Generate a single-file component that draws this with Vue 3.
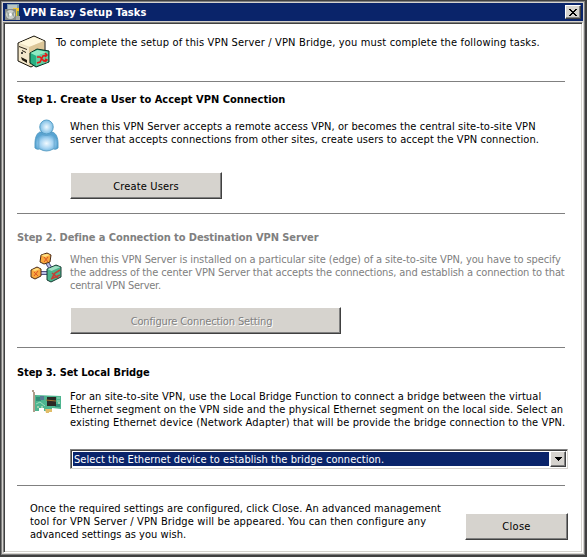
<script setup>
const steps = {
  one: [
    ['When this VPN Server accepts a remote access VPN, or becomes the central site-to-site VPN', 'a1'],
    ['server that accepts connections from other sites, create users to accept the VPN connection.', 'a2'],
  ],
  two: [
    ['When this VPN Server is installed on a particular site (edge) of a site-to-site VPN, you have to specify', 'b1'],
    ['the address of the center VPN Server that accepts the connections, and establish a connection to that', 'b2'],
    ['central VPN Server.', 'b3'],
  ],
  three: [
    ['For an site-to-site VPN, use the Local Bridge Function to connect a bridge between the virtual', 'c1'],
    ['Ethernet segment on the VPN side and the physical Ethernet segment on the local side. Select an', 'c2'],
    ['existing Ethernet device (Network Adapter) that will be provide the bridge connection to the VPN.', 'c3'],
  ],
  end: [
    ['Once the required settings are configured, click Close. An advanced management', 'd1'],
    ['tool for VPN Server / VPN Bridge will be appeared. You can then configure any', 'd2'],
    ['advanced settings as you wish.', 'd3'],
  ],
}
</script>

<template>
  <div class="window">
    <div class="frame">
      <header class="titlebar">
        <svg class="title-icon" width="16" height="16" viewBox="0 0 16 16">
          <path d="M2 0h12v5H2z" fill="#7c9bab" /><path d="M3 1h9v5H3z" fill="#b9c4c2" />
          <path d="M8 4h6v8h-3V6H8z" fill="#f1c42c" /><path d="M12 7h2v6h-2z" fill="#7a9a58" />
          <path d="M0 5h11v11H0z" fill="#858a85" /><circle cx="5.5" cy="10.500" r="4.6" fill="#cdd2ce" />
          <path d="M2 7l3 3-2 4zM9 7l-3 3 3 3z" fill="#98a49c" /><circle cx="5.5" cy="10.500" r="1.4" fill="#fff" />
          <path d="M11 12h4v4h-4z" fill="#a7aaa5" />
        </svg>
        <h1 class="title">VPN Easy Setup Tasks</h1>
        <button class="close-x" aria-label="Close window">
          <svg width="8" height="7" viewBox="0 0 8 7" shape-rendering="crispEdges">
            <path d="M0 0h2v1h1v1h2V1h1V0h2v1H7v1H6v1H5v1h1v1h1v1h1v1H6V6H5V5H3v1H2v1H0V6h1V5h1V4h1V3H2V2H1V1H0z" />
          </svg>
        </button>
      </header>

      <main class="client">
        <section class="intro">
          <svg width="33" height="33" viewBox="0 0 33 33">
            <path d="M1 8L17 1l11 5v18l-14 8L1 26z" fill="#eadfc1" stroke="#151007" />
            <path d="M2 8l15-6 10 4-14 6z" fill="#fff7dc" />
            <path d="M12 12l15-6v17l-15 8z" fill="#dcc698" />
            <path d="M2 9l10 4v17L2 25z" fill="#f4e8cb" />
            <path d="M2 11l8 3v1l-8-3zM5 15l4 2v1l-4-2zM4 22l6 3v3l-5-3z" fill="#251d11" />
            <circle cx="5" cy="18" r="1" fill="#111" />
            <path d="M13 18l7-4 12 2v11l-13 5-6-4z" fill="#28b183" stroke="#062f23" />
            <path d="M13.500 18l7-3 11 2-12 4z" fill="#8eeac3" />
            <path d="M19 21l12-4v10l-12 4z" fill="#65cda1" />
            <path d="M20 22h3l4 4 3-1M20 28l3-1 3-6 4-1M28 18l2 2-2 2M28 24l2 1-2 2" fill="none" stroke="#e21a18" stroke-width="1.600" />
          </svg>
          <p class="text i1">To complete the setup of this VPN Server / VPN Bridge, you must complete the following tasks.</p>
        </section>

        <section class="step step-one">
          <h2 class="heading">Step 1. Create a User to Accept VPN Connection</h2>
          <div class="detail">
            <svg class="user" width="25" height="33" viewBox="0 0 26 33" preserveAspectRatio="none">
              <defs>
                <radialGradient id="body" cx=".5" cy=".6"><stop offset="0" stop-color="#f2faff" /><stop offset=".55" stop-color="#a5d3f2" /><stop offset="1" stop-color="#58a4d2" /></radialGradient>
                <radialGradient id="head"><stop offset="0" stop-color="#eff9ff" /><stop offset="1" stop-color="#7bbde5" /></radialGradient>
              </defs>
              <path d="M6 13C2 15 1 20 1 25v4q2 2 5 1 7 4 14 0 3 1 5-1v-5c0-5-2-10-6-11z" fill="url(#body)" stroke="#4a93bd" stroke-width=".8" />
              <path d="M5 18v12M21 18v12" stroke="#66a8d0" stroke-width=".8" />
              <circle cx="13" cy="8" r="7" fill="url(#head)" stroke="#559cc4" />
              <path d="M7 14q6 5 12 0" fill="none" stroke="#5c9fcb" />
            </svg>
            <div class="copy"><p v-for="[line, name] in steps.one" :key="name" class="text" :class="name">{{ line }}</p></div>
          </div>
          <button class="button create"><span class="e1">Create Users</span></button>
        </section>

        <section class="step step-two">
          <h2 class="heading">Step 2. Define a Connection to Destination VPN Server</h2>
          <div class="detail">
            <svg class="nodes" width="32" height="31" viewBox="0 0 32 31">
              <path d="M16 9l5 8M9 21h9" stroke="#515486" stroke-width="4" /><path d="M16 9l5 8M9 21h9" stroke="#b9bee2" stroke-width="2" />
              <path d="M11 3l6-2 4 2-1 7-6 2-4-2zM1 18l6-3 4 2v7l-6 3-4-2z" fill="#f9a83e" stroke="#4c2c18" />
              <path d="M11 3l6-1 3 1-5 2zM2 18l5-2 3 1-5 2z" fill="#ffe184" />
              <path d="M14 5l4 5M18 5l-4 5M4 20l4 4M8 19l-4 5" stroke="#dc5328" />
              <path d="M17 17l9-4 5 2v10l-10 5-4-2z" fill="#4bb58d" stroke="#193b33" />
              <path d="M17.500 17l8-3 5 1-9 4z" fill="#a0dfc2" />
              <path d="M21 27l9-4M22 21l6 5M22 26l3-5 5-3" fill="none" stroke="#c43f34" stroke-width="1.500" />
            </svg>
            <div class="copy"><p v-for="[line, name] in steps.two" :key="name" class="text" :class="name">{{ line }}</p></div>
          </div>
          <button class="button configure" disabled><span class="e2">Configure Connection Setting</span></button>
        </section>

        <section class="step step-three">
          <h2 class="heading h3">Step 3. Set Local Bridge</h2>
          <div class="detail">
            <svg class="card" width="30" height="24" viewBox="0 0 30 24">
              <path d="M0 0h2v2h1v20H1V2H0z" fill="#b19f8d" />
              <path d="M3 5l26 1v13l-9-1v3h-8v-3H7v3H3z" fill="#4eb58f" />
              <path d="M4 7h5v4H4zM23 14h5v3h-5z" fill="#318e78" /><path d="M8 6h4v4H8z" fill="#577c94" />
              <path d="M15 7h9v9h-9z" fill="#2b2824" /><path d="M14 10l10 1" stroke="#a47434" />
              <path d="M13 19h7v3h-3v1h-3z" fill="#e1bd69" />
              <path d="M4 14l4-2 5 4M25 8h3M25 11h3" fill="none" stroke="#9adcbb" />
              <path d="M5 17h2M9 17h2M26 13h2" stroke="#f0eacb" />
            </svg>
            <div class="copy"><p v-for="[line, name] in steps.three" :key="name" class="text" :class="name">{{ line }}</p></div>
          </div>
          <div class="combo" role="combobox">
            <span class="selected"><span class="e3">Select the Ethernet device to establish the bridge connection.</span></span>
            <span class="arrow"><svg width="7" height="4" viewBox="0 0 7 4" shape-rendering="crispEdges"><path d="M0 0h7v1H6v1H5v1H4v1H3V3H2V2H1V1H0z" /></svg></span>
          </div>
        </section>

        <footer class="footer">
          <div class="copy"><p v-for="[line, name] in steps.end" :key="name" class="text" :class="name">{{ line }}</p></div>
          <button class="button close"><span class="e4">Close</span></button>
        </footer>
      </main>
    </div>
  </div>
</template>

<style>
body { margin: 0; overflow: hidden; }
</style>

<style scoped>
* { box-sizing: border-box; }
.window { width: 587px; height: 557px; border: solid #404040; border-width: 1px 2px 2px 1px; font: 11px/13px "DejaVu Sans Condensed", "DejaVu Sans", sans-serif; font-stretch: condensed; color: #000; }
.frame { height: 554px; padding: 1px; background: #d6d3ce; border: 1px solid #808080; }
.titlebar { display: flex; align-items: center; height: 18px; padding: 0 2px; background: #0a246a; }
.title { margin: 0 auto 0 2px; font-size: 11px; line-height: 13px; letter-spacing: .05px; color: #fff; white-space: nowrap; }
.close-x { display: grid; place-items: center; width: 16px; height: 14px; padding: 0; background: #d6d3ce; border: 1px solid; border-color: #fff #404040 #404040 #fff; box-shadow: inset -1px -1px #808080; }
.client { height: 531px; margin-top: 1px; padding: 1px 0 0 13px; background: #fff; border: 1px solid; border-color: #808080 #fff #fff #808080; box-shadow: inset 1px 1px #404040, inset -1px -1px #d6d3ce; }
p, h2 { margin: 0; white-space: nowrap; }
.intro { display: flex; gap: 6px; width: 548px; height: 58px; padding-top: 11px; border-bottom: 1px solid #808080; }
.i1 { padding-top: 1px; }
.step { width: 548px; border-bottom: 1px solid #808080; }
.heading { font-size: 11px; line-height: 13px; }
.step-one { height: 132px; padding-top: 11px; }
.step-two { height: 134px; padding-top: 17px; color: #808080; }
.step-two .heading { letter-spacing: -.08px; }
.h3 { letter-spacing: -.07px; }
.step-three { height: 138px; padding-top: 18px; }
.detail { display: grid; grid-template-columns: 53px 1fr; }
.step-one .detail { height: 66px; padding-top: 14px; }
.step-two .detail { height: 63px; padding-top: 9px; }
.step-three .detail { height: 70px; padding-top: 11px; }
.user { margin: -1px 0 0 17px; }
.nodes { margin: -1px 0 0 13px; }
.card { margin: 0 0 0 15px; }
.i1 { letter-spacing: .16px; }
.a1 { letter-spacing: .08px; }
.a2 { letter-spacing: .086px; }
.b1 { letter-spacing: -.1px; }
.b2 { letter-spacing: -.12px; }
.b3 { letter-spacing: -.25px; }
.c1, .c2 { letter-spacing: .09px; }
.c3 { letter-spacing: .115px; }
.d1 { letter-spacing: .065px; }
.d2 { letter-spacing: .14px; }
.d3 { letter-spacing: .03px; }
.e1 { letter-spacing: .15px; }
.e2 { padding-right: 8px; letter-spacing: -.14px; }
.e3 { letter-spacing: .05px; }
.e4 { letter-spacing: .3px; }
.button { display: grid; place-items: center; height: 27px; padding: 0; font: inherit; color: #000; white-space: nowrap; background: #d6d3ce; border: 1px solid; border-color: #fff #404040 #404040 #fff; box-shadow: inset -1px -1px #808080; }
.create { width: 152px; margin-left: 53px; padding-top: 2px; }
.configure { width: 271px; margin-left: 53px; padding-top: 2px; color: #808080; text-shadow: 1px 1px #fff; }
.combo { display: flex; width: 498px; height: 20px; margin-left: 53px; padding: 1px; border: 1px solid; border-color: #808080 #d6d3ce #d6d3ce #808080; box-shadow: inset 1px 1px #404040; }
.selected { flex: 1; height: 14px; margin: 1px; padding-left: 1px; line-height: 16px; color: #fff; background: #0a246a; white-space: nowrap; }
.arrow { display: grid; place-items: center; width: 16px; background: #d6d3ce; border: 1px solid; border-color: #fff #404040 #404040 #fff; box-shadow: inset -1px -1px #808080; }
.footer { display: flex; justify-content: space-between; width: 551px; padding: 16px 0 0 13px; }
.close { width: 103px; margin-top: 11px; }
</style>
